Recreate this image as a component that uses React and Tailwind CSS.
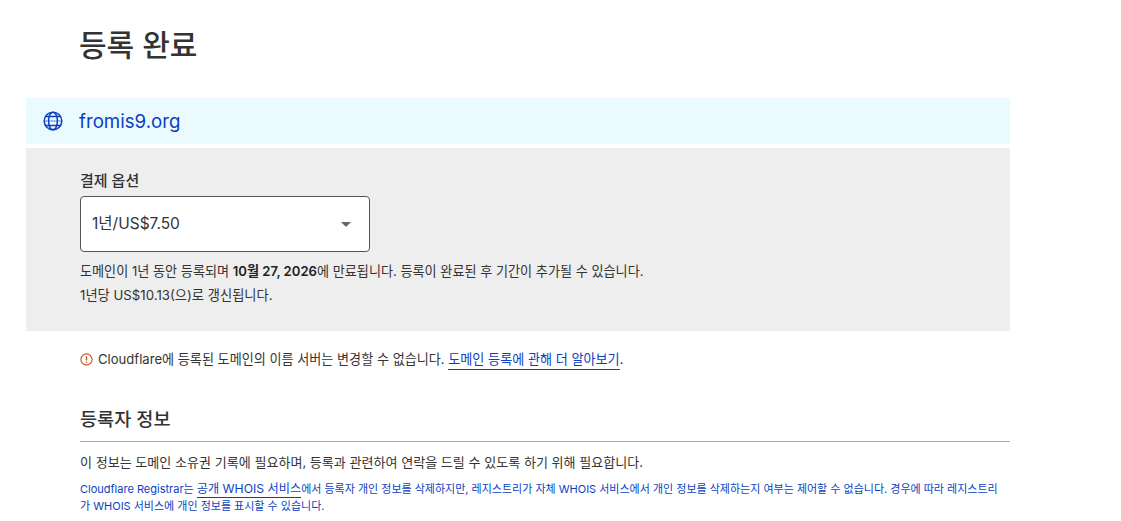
const GlobeIcon = () => (
  <svg width="20" height="20" viewBox="0 0 20 20" fill="none" stroke="#0a3fc2" strokeWidth="1.5">
    <circle cx="10" cy="10" r="8.8" />
    <ellipse cx="10" cy="10" rx="4.4" ry="8.8" />
    <path d="M2 5.6h16M2 14.4h16" />
    <path d="M1.5 10h17" strokeWidth="1" strokeDasharray="1 0.6" />
  </svg>
);

const InfoIcon = () => (
  <svg width="13" height="13" viewBox="0 0 13 13" fill="none" stroke="#c2521c" strokeWidth="1.1">
    <circle cx="6.5" cy="6.5" r="5.6" />
    <path d="M6.5 3.2v4.2M6.5 8.6v1.2" strokeWidth="1.3" />
  </svg>
);

export default function App() {
  return (
    <div className="w-[1121px] h-[521px] overflow-hidden bg-white text-[#222] font-['Inter','Noto_Sans_CJK_KR',sans-serif]">
      <div className="w-[984px] ml-[26px]">
        <h1 className="pl-[53px] pt-[25px] h-[98px] text-[30px] leading-[40px] font-medium text-[#333]">등록 완료</h1>

        <div className="h-[46px] bg-[#ebfaff] flex items-center pl-[17px] gap-[16px] text-[#0a3fc2] text-[18.7px]">
          <GlobeIcon />
          <span className="pt-[2px]">fromis9.org</span>
        </div>

        <div className="mt-[4px] h-[183px] bg-[#eeeeee] pl-[54px] pt-[22px]">
          <label className="block text-[15px] leading-[22px] font-medium text-[#333]">결제 옵션</label>
          <div className="mt-[4px] w-[290px] h-[56px] bg-white border border-[#555] rounded-[4px] flex items-center justify-between pl-[11px] pr-[18px] text-[15.5px] text-[#333]">
            <span>1년/US$7.50</span>
            <span className="w-0 h-0 border-x-[5px] border-x-transparent border-t-[5px] border-t-[#666]" />
          </div>
          <p className="mt-[9px] text-[13.12px] leading-[20px] text-[#333]">
            도메인이 1년 동안 등록되며 <b className="font-semibold text-[#222]">10월 27, 2026</b>에 만료됩니다. 등록이 완료된 후 기간이 추가될 수 있습니다.
          </p>
          <p className="mt-[4px] text-[13.25px] leading-[20px] text-[#333]">1년당 US$10.13(으)로 갱신됩니다.</p>
        </div>

        <div className="pl-[54px]">
          <p className="mt-[18px] flex items-center gap-[5px] text-[13.1px] leading-[21px] text-[#333]">
            <InfoIcon />
            <span>
              Cloudflare에 등록된 도메인의 이름 서버는 변경할 수 없습니다.{" "}
              <a className="text-[#0a3fc2] border-b border-[#0a3fc2] pb-[2px]">도메인 등록에 관해 더 알아보기</a>.
            </span>
          </p>

          <h2 className="mt-[36px] text-[18.6px] leading-[26px] font-medium text-[#333] pb-[9px] border-b border-[#aaa]">등록자 정보</h2>

          <p className="mt-[10px] text-[13.05px] leading-[20px] text-[#333]">
            이 정보는 도메인 소유권 기록에 필요하며, 등록과 관련하여 연락을 드릴 수 있도록 하기 위해 필요합니다.
          </p>

          <p className="mt-[9px] text-[11px] leading-[17px] text-[#0a3fc2]">
            Cloudflare Registrar는 <a className="text-[12.2px] leading-none border-b border-[#0a3fc2] pb-[1px]">공개 WHOIS 서비스</a>에서 등록자 개인 정보를 삭제하지만, 레지스트리가 자체 WHOIS 서비스에서 개인 정보를 삭제하는지 여부는 제어할 수 없습니다. 경우에 따라 레지스트리<br />가 WHOIS 서비스에 개인 정보를 표시할 수 있습니다.
          </p>
        </div>
      </div>
    </div>
  );
}
